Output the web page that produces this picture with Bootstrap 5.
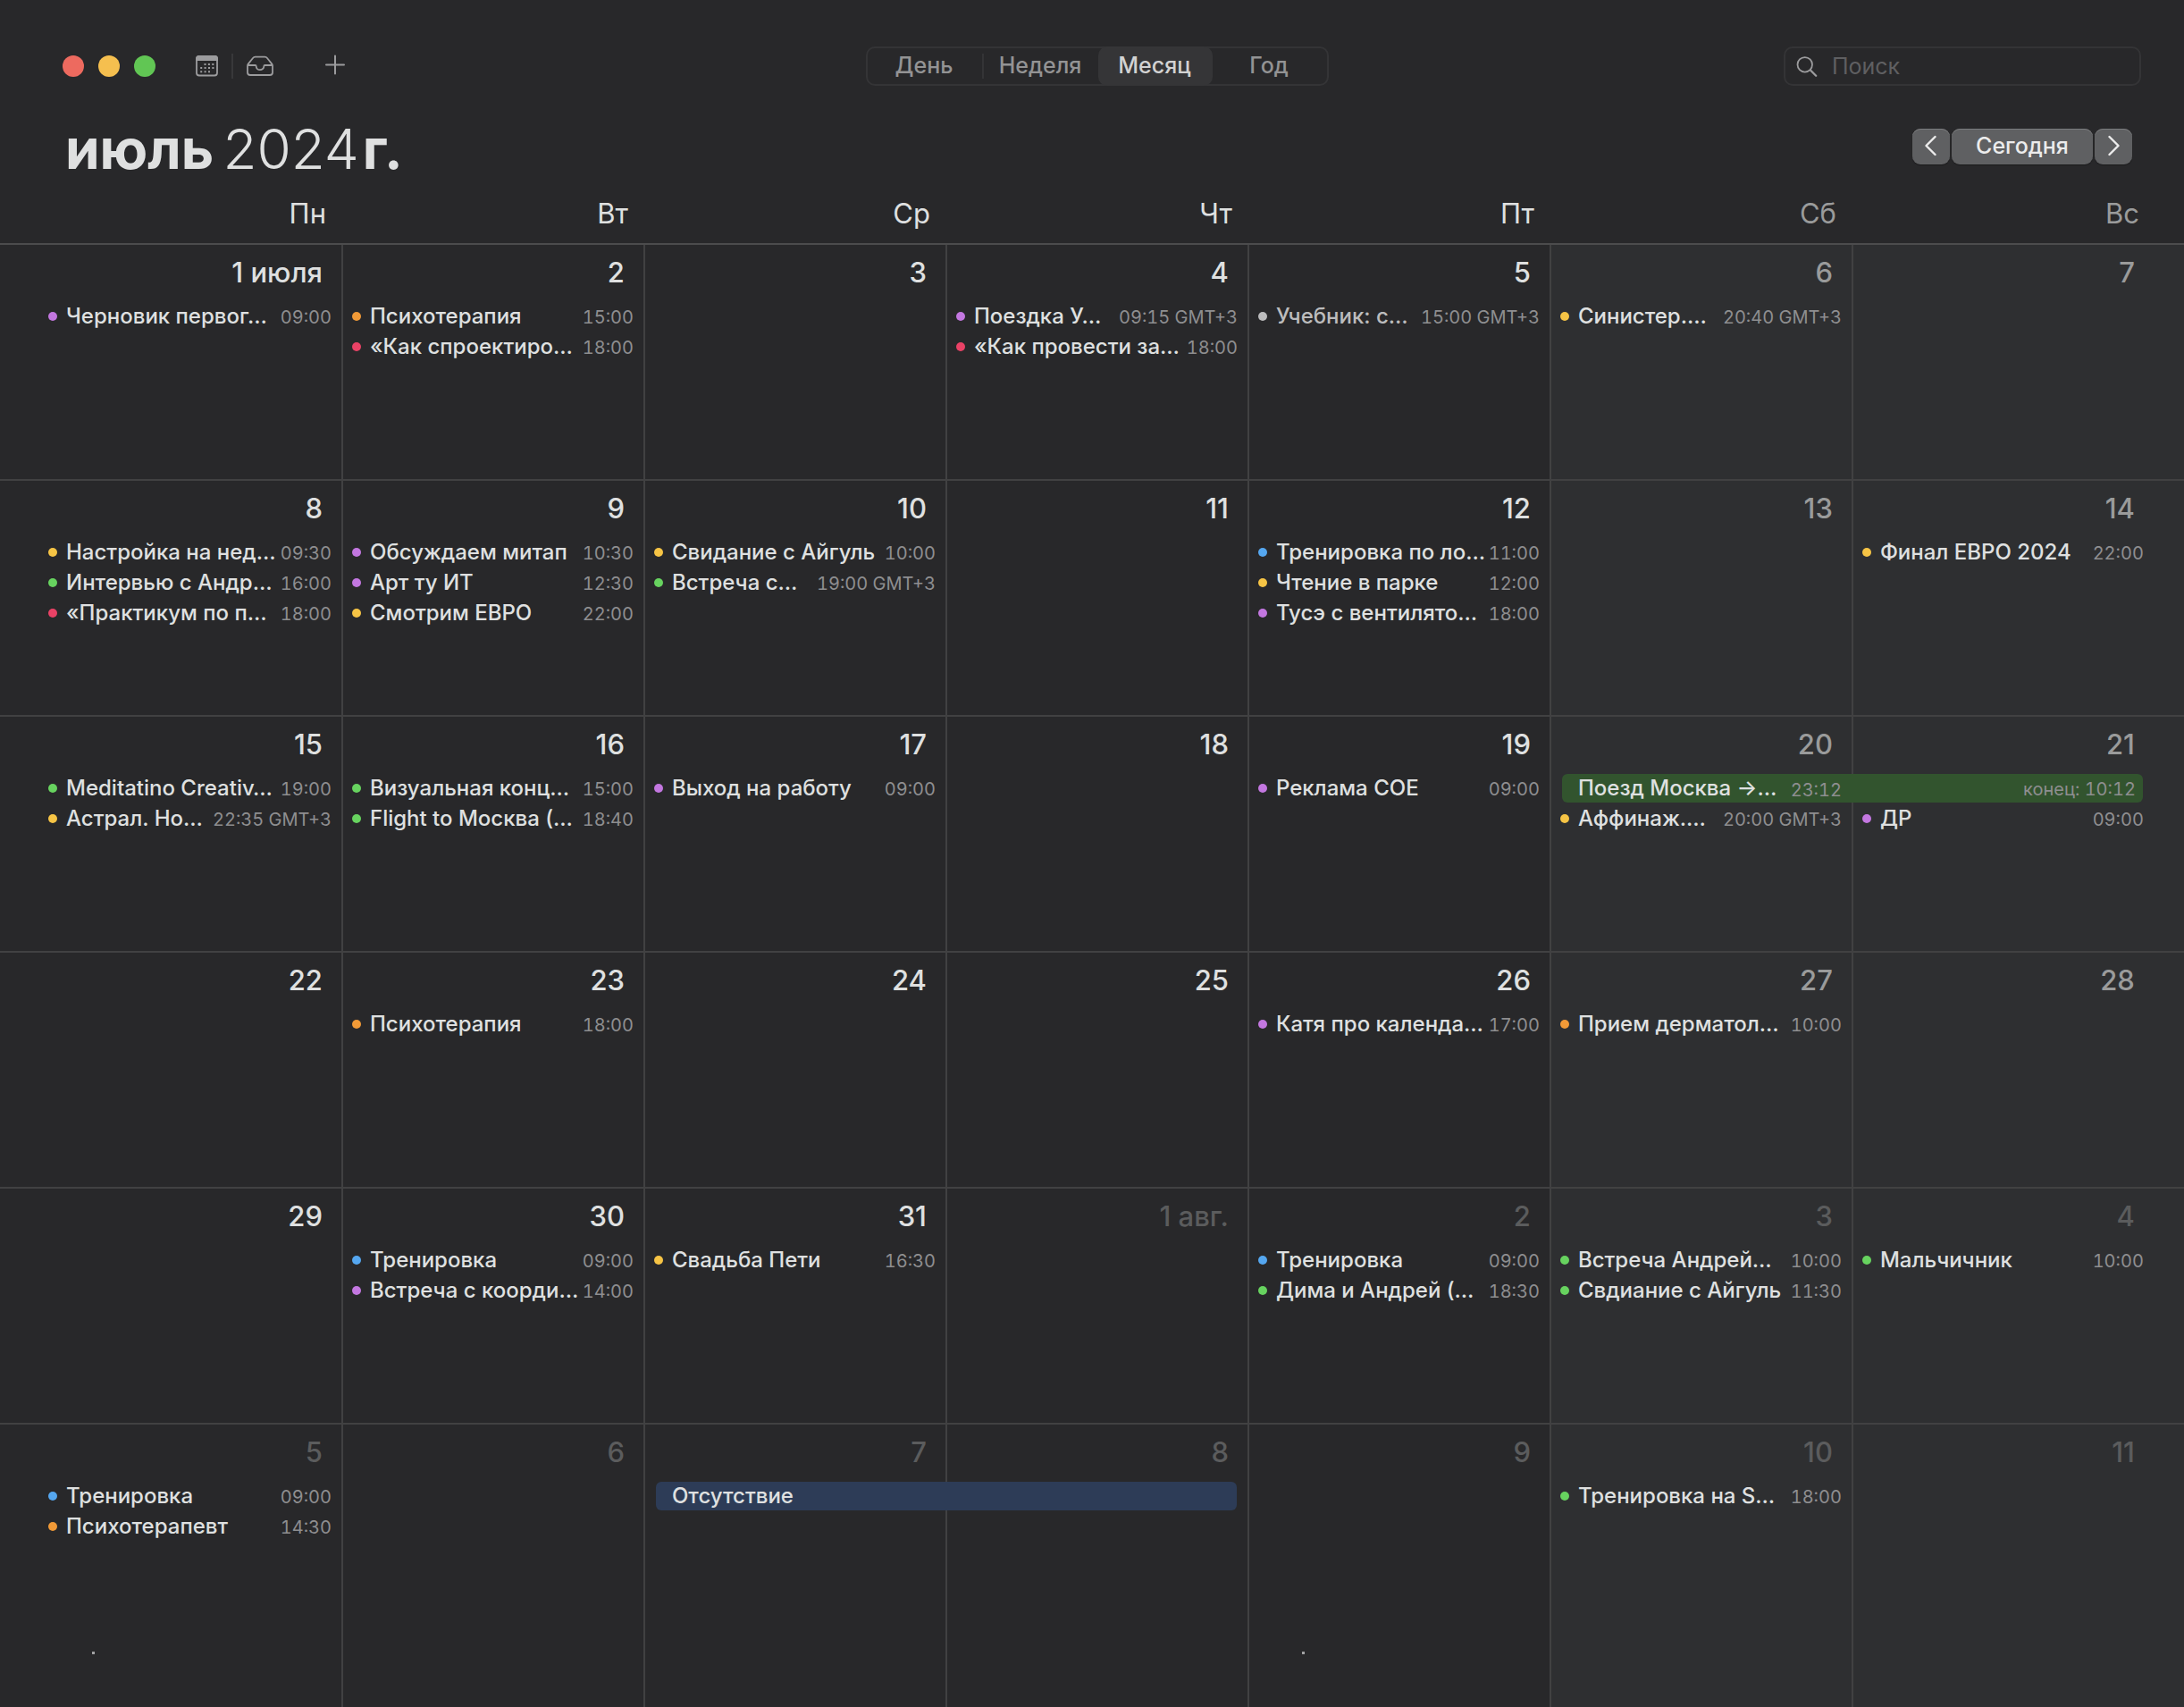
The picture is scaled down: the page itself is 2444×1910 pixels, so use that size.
<!DOCTYPE html>
<html lang="ru" data-bs-theme="dark">
<head>
<meta charset="utf-8">
<meta name="viewport" content="width=device-width, initial-scale=1">
<title>Календарь — июль 2024 г.</title>
<link rel="stylesheet" href="https://cdn.jsdelivr.net/npm/bootstrap@5.3.0/dist/css/bootstrap.min.css">
<style>
  :root {
    --cal-bg: #28282a;
    --cal-weekend: #2e2f31;
    --cal-line: #414142;
    --cal-frame: #343436;
    --cal-text: #dfe0e0;
    --cal-soft: #9a9b9b;
    --cal-faint: #5b5c5d;
  }
  body {
    background: var(--cal-bg);
    color: var(--cal-text);
    font-family: Inter, "Liberation Sans", sans-serif;
    font-size: 24px;
  }
  .toolbar { padding: 52px 48px 0 60px; }
  .toolbar-side { flex: 1 1 0; }
  .lights { gap: 16px; margin: 0 39px 0 10px; }
  .light { width: 24px; height: 24px; border-radius: 50%; border: 0; padding: 0; }
  .light-close { background: #ed6a5f; }
  .light-min { background: #f5bf4f; }
  .light-zoom { background: #61c654; }
  .tool { background: none; border: 0; padding: 0; line-height: 0; color: #9c9c9e; }
  .tool-line { width: 2px; height: 28px; background: #38383a; margin: 0 14px; }
  .tool-add { margin-left: 56px; }

  .views { width: 518px; height: 44px; border: 2px solid var(--cal-frame); border-radius: 10px; }
  .view-btn { flex: 1 1 0; border: 0; margin: -2px 0; background: none; color: #939394; font-size: 25px; line-height: 40px; font-weight: 500; padding: 0 2px 2px 0; border-radius: 10px; }
  .view-btn.current { background: #353537; color: #d2d2d2; }
  .view-line { width: 2px; height: 28px; background: var(--cal-frame); }

  .search { width: 400px; height: 44px; border: 2px solid var(--cal-frame); border-radius: 10px; padding-left: 12px; gap: 16px; color: #9c9c9e; }
  .search input { background: none; border: 0; outline: 0; color: var(--cal-text); font-size: 25px; line-height: 40px; padding: 0; min-width: 0; }
  .search input::placeholder { color: #5f5f61; opacity: 1; }

  .heading { padding: 30px 58px 0 73px; height: 106px; }
  .month-title { font-size: 62px; line-height: 76px; padding-top: 5px; font-weight: 700; color: var(--cal-text); }
  .month-title .year { font-weight: 300; margin: 0 4px 0 10px; }
  .pager { gap: 2px; }
  .pager-btn { height: 40px; border: 0; border-radius: 9px; background: #5f6062; color: #ececec; font-size: 25px; font-weight: 500; line-height: 38px; padding: 0 0 2px; box-shadow: inset 0 1px 0 #7b7c7e, 0 1px 1px #1c1c1d; }
  .pager-step { width: 42px; }
  .pager-today { width: 158px; }

  .week, .weekdays {
    --unit: calc((100% - 78px) / 7);
    display: grid;
    grid-template-columns: calc(var(--unit) + 46px) repeat(5, var(--unit)) calc(var(--unit) + 32px);
    grid-template-rows: 1fr;
  }
  .weekdays { border-bottom: 2px solid #4c4c4d; font-size: 31px; font-weight: 400; line-height: 66px; padding-top: 4px; text-align: right; }
  .weekdays div { padding-right: 19px; }
  .weekdays div:last-child { padding-right: 50px; }
  .weekdays .rest { color: var(--cal-soft); }

  .week { min-height: 264px; border-bottom: 2px solid var(--cal-line); }
  .week:last-child { flex-grow: 1; border-bottom: 0; }
  .day { grid-row: 1; display: flex; flex-direction: column; min-width: 0; border-right: 2px solid var(--cal-line); padding: 0 11px 0 10px; }
  .day:nth-child(1) { grid-column: 1; padding-left: 54px; }
  .day:nth-child(2) { grid-column: 2; }
  .day:nth-child(3) { grid-column: 3; }
  .day:nth-child(4) { grid-column: 4; }
  .day:nth-child(5) { grid-column: 5; }
  .day:nth-child(6) { grid-column: 6; background: var(--cal-weekend); }
  .day:nth-child(7) { grid-column: 7; background: var(--cal-weekend); border-right: 0; padding-right: 45px; }
  .date { display: block; text-align: right; font-size: 31px; font-weight: 500; line-height: 62px; padding: 0 10px 1px 0; }
  .day:nth-child(n+6) .date { color: var(--cal-soft); }
  .day.other .date { color: var(--cal-faint); }

  .ev { display: flex; align-items: center; height: 34px; white-space: nowrap; }
  .ev::before { content: ""; flex: none; width: 10px; height: 10px; border-radius: 50%; background: var(--dot); margin-right: 10px; }
  .ev b { flex: 1 1 0; min-width: 0; font-weight: 450; }
  .ev time, .span-bar time { font-size: 20px; color: #8e8e90; padding-top: 2px; font-variant-numeric: tabular-nums; }
  .ev-slot { height: 34px; }
  .purple { --dot: #c377e0; }
  .orange { --dot: #f19a37; }
  .red { --dot: #ea4266; }
  .yellow { --dot: #f6c445; }
  .green { --dot: #67d35f; }
  .blue { --dot: #55a7f0; }
  .grey { --dot: #bcbcbd; }
  .grey b { color: #bcbcbd; }
  .speck { width: 3px; height: 3px; background: #a2a2a3; margin: auto 0 59px 49px; }

  .span-bar { grid-row: 1; align-self: start; display: grid; grid-template-columns: 1fr 1fr; height: 32px; line-height: 32px; margin: 64px 14px 0 12px; border-radius: 6px; white-space: nowrap; z-index: 1; }
  .span-bar b { font-weight: 450; }
  .span-start { display: flex; justify-content: space-between; padding: 0 12px 0 18px; }
  .span-end { text-align: right; padding-right: 8px; }
  .span-trip { grid-column: 6 / 8; background: #32542e; margin-right: 46px; }
  .span-away { grid-column: 3 / 5; background: #2d3c57; }
</style>
<script src="https://cdn.jsdelivr.net/npm/bootstrap@5.3.0/dist/js/bootstrap.bundle.min.js"></script>
</head>
<body class="d-flex flex-column min-vh-100">

<header>
  <div class="toolbar d-flex align-items-center">
    <div class="toolbar-side d-flex align-items-center">
      <div class="lights d-flex">
        <button class="light light-close" aria-label="Закрыть"></button>
        <button class="light light-min" aria-label="Свернуть"></button>
        <button class="light light-zoom" aria-label="Развернуть"></button>
      </div>
      <button class="tool ms-1" aria-label="Календари">
        <svg width="28" height="26" viewBox="0 0 28 26" fill="none">
          <rect x="3" y="2" width="23" height="21.5" rx="3" stroke="currentColor" stroke-width="1.8"/>
          <path d="M2 7V4.500Q2 1 5.500 1h18Q27 1 27 4.500V7z" fill="currentColor"/>
          <path d="M11.500 11h11M7.200 15h15.400M7.200 19.200h11" stroke="currentColor" stroke-width="2" stroke-dasharray="2 2.400"/>
        </svg>
      </button>
      <div class="tool-line"></div>
      <button class="tool" aria-label="Входящие">
        <svg width="32" height="26" viewBox="0 0 32 26" fill="none" stroke="currentColor" stroke-width="1.8" stroke-linejoin="round">
          <path d="M2 12.500V20q0 3 3 3h22q3 0 3-3v-7.500q0-1-.7-1.900L24 4q-1-1.300-2.600-1.300H10.600Q9 2.700 8 4l-5.300 6.600Q2 11.500 2 12.500z"/>
          <path d="M2.500 12h8q1.200 0 1.200 1.200a4.300 4 0 0 0 8.600 0q0-1.200 1.200-1.200h8"/>
        </svg>
      </button>
      <button class="tool tool-add" aria-label="Добавить событие">
        <svg width="24" height="26" viewBox="0 0 24 26" fill="none" stroke="currentColor" stroke-width="2" stroke-linecap="round"><path d="M2 11.500h20M12 1.500v20"/></svg>
      </button>
    </div>
    <div class="views d-flex align-items-center" role="group" aria-label="Вид">
      <button class="view-btn">День</button>
      <span class="view-line"></span>
      <button class="view-btn">Неделя</button>
      <button class="view-btn current align-self-stretch" aria-pressed="true">Месяц</button>
      <button class="view-btn">Год</button>
    </div>
    <div class="toolbar-side d-flex justify-content-end">
      <label class="search d-flex align-items-center">
        <svg width="27" height="27" viewBox="0 0 27 27" fill="none" stroke="currentColor" stroke-width="2" stroke-linecap="round"><circle cx="11" cy="11" r="9.300"/><path d="M18 18l7 7" stroke-width="2.600"/></svg>
        <input type="text" class="flex-grow-1" placeholder="Поиск" aria-label="Поиск">
      </label>
    </div>
  </div>
  <div class="heading d-flex justify-content-between align-items-center">
    <h1 class="month-title d-flex m-0"><span>июль</span> <span class="year">2024</span> <span>г.</span></h1>
    <div class="pager d-flex">
      <button class="pager-btn pager-step" aria-label="Предыдущий месяц"><svg class="d-block mx-auto" width="14" height="24" viewBox="0 0 14 24" fill="none" stroke="currentColor" stroke-width="2.400" stroke-linecap="round" stroke-linejoin="round"><path d="M11.500 2L1.500 12l10 10"/></svg></button>
      <button class="pager-btn pager-today">Сегодня</button>
      <button class="pager-btn pager-step" aria-label="Следующий месяц"><svg class="d-block mx-auto" width="14" height="24" viewBox="0 0 14 24" fill="none" stroke="currentColor" stroke-width="2.400" stroke-linecap="round" stroke-linejoin="round"><path d="M2.500 2l10 10-10 10"/></svg></button>
    </div>
  </div>
</header>

<main class="d-flex flex-column flex-grow-1">
  <div class="weekdays">
    <div>Пн</div><div>Вт</div><div>Ср</div><div>Чт</div><div>Пт</div><div class="rest">Сб</div><div class="rest">Вс</div>
  </div>

  <section class="week">
    <div class="day"><span class="date">1 июля</span>
      <div class="ev purple"><b>Черновик первог…</b><time>09:00</time></div>
    </div>
    <div class="day"><span class="date">2</span>
      <div class="ev orange"><b>Психотерапия</b><time>15:00</time></div>
      <div class="ev red"><b>«Как спроектиро…</b><time>18:00</time></div>
    </div>
    <div class="day"><span class="date">3</span></div>
    <div class="day"><span class="date">4</span>
      <div class="ev purple"><b>Поездка У…</b><time>09:15 GMT+3</time></div>
      <div class="ev red"><b>«Как провести за…</b><time>18:00</time></div>
    </div>
    <div class="day"><span class="date">5</span>
      <div class="ev grey"><b>Учебник: с…</b><time>15:00 GMT+3</time></div>
    </div>
    <div class="day"><span class="date">6</span>
      <div class="ev yellow"><b>Синистер.…</b><time>20:40 GMT+3</time></div>
    </div>
    <div class="day"><span class="date">7</span></div>
  </section>

  <section class="week">
    <div class="day"><span class="date">8</span>
      <div class="ev yellow"><b>Настройка на нед…</b><time>09:30</time></div>
      <div class="ev green"><b>Интервью с Андр…</b><time>16:00</time></div>
      <div class="ev red"><b>«Практикум по п…</b><time>18:00</time></div>
    </div>
    <div class="day"><span class="date">9</span>
      <div class="ev purple"><b>Обсуждаем митап</b><time>10:30</time></div>
      <div class="ev purple"><b>Арт ту ИТ</b><time>12:30</time></div>
      <div class="ev yellow"><b>Смотрим ЕВРО</b><time>22:00</time></div>
    </div>
    <div class="day"><span class="date">10</span>
      <div class="ev yellow"><b>Свидание с Айгуль</b><time>10:00</time></div>
      <div class="ev green"><b>Встреча с…</b><time>19:00 GMT+3</time></div>
    </div>
    <div class="day"><span class="date">11</span></div>
    <div class="day"><span class="date">12</span>
      <div class="ev blue"><b>Тренировка по ло…</b><time>11:00</time></div>
      <div class="ev yellow"><b>Чтение в парке</b><time>12:00</time></div>
      <div class="ev purple"><b>Тусэ с вентилято…</b><time>18:00</time></div>
    </div>
    <div class="day"><span class="date">13</span></div>
    <div class="day"><span class="date">14</span>
      <div class="ev yellow"><b>Финал ЕВРО 2024</b><time>22:00</time></div>
    </div>
  </section>

  <section class="week">
    <div class="day"><span class="date">15</span>
      <div class="ev green"><b>Meditatino Creativ…</b><time>19:00</time></div>
      <div class="ev yellow"><b>Астрал. Но…</b><time>22:35 GMT+3</time></div>
    </div>
    <div class="day"><span class="date">16</span>
      <div class="ev green"><b>Визуальная конц…</b><time>15:00</time></div>
      <div class="ev green"><b>Flight to Москва (…</b><time>18:40</time></div>
    </div>
    <div class="day"><span class="date">17</span>
      <div class="ev purple"><b>Выход на работу</b><time>09:00</time></div>
    </div>
    <div class="day"><span class="date">18</span></div>
    <div class="day"><span class="date">19</span>
      <div class="ev purple"><b>Реклама СОЕ</b><time>09:00</time></div>
    </div>
    <div class="day"><span class="date">20</span>
      <div class="ev-slot"></div>
      <div class="ev yellow"><b>Аффинаж.…</b><time>20:00 GMT+3</time></div>
    </div>
    <div class="day"><span class="date">21</span>
      <div class="ev-slot"></div>
      <div class="ev purple"><b>ДР</b><time>09:00</time></div>
    </div>
    <div class="span-bar span-trip">
      <div class="span-start"><b>Поезд Москва →…</b><time>23:12</time></div>
      <div class="span-end"><time>конец: 10:12</time></div>
    </div>
  </section>

  <section class="week">
    <div class="day"><span class="date">22</span></div>
    <div class="day"><span class="date">23</span>
      <div class="ev orange"><b>Психотерапия</b><time>18:00</time></div>
    </div>
    <div class="day"><span class="date">24</span></div>
    <div class="day"><span class="date">25</span></div>
    <div class="day"><span class="date">26</span>
      <div class="ev purple"><b>Катя про календа…</b><time>17:00</time></div>
    </div>
    <div class="day"><span class="date">27</span>
      <div class="ev orange"><b>Прием дерматол…</b><time>10:00</time></div>
    </div>
    <div class="day"><span class="date">28</span></div>
  </section>

  <section class="week">
    <div class="day"><span class="date">29</span></div>
    <div class="day"><span class="date">30</span>
      <div class="ev blue"><b>Тренировка</b><time>09:00</time></div>
      <div class="ev purple"><b>Встреча с коорди…</b><time>14:00</time></div>
    </div>
    <div class="day"><span class="date">31</span>
      <div class="ev yellow"><b>Свадьба Пети</b><time>16:30</time></div>
    </div>
    <div class="day other"><span class="date">1 авг.</span></div>
    <div class="day other"><span class="date">2</span>
      <div class="ev blue"><b>Тренировка</b><time>09:00</time></div>
      <div class="ev green"><b>Дима и Андрей (…</b><time>18:30</time></div>
    </div>
    <div class="day other"><span class="date">3</span>
      <div class="ev green"><b>Встреча Андрей…</b><time>10:00</time></div>
      <div class="ev green"><b>Свдиание с Айгуль</b><time>11:30</time></div>
    </div>
    <div class="day other"><span class="date">4</span>
      <div class="ev green"><b>Мальчичник</b><time>10:00</time></div>
    </div>
  </section>

  <section class="week">
    <div class="day other"><span class="date">5</span>
      <div class="ev blue"><b>Тренировка</b><time>09:00</time></div>
      <div class="ev orange"><b>Психотерапевт</b><time>14:30</time></div>
      <div class="speck"></div>
    </div>
    <div class="day other"><span class="date">6</span></div>
    <div class="day other"><span class="date">7</span></div>
    <div class="day other"><span class="date">8</span></div>
    <div class="day other"><span class="date">9</span><div class="speck"></div></div>
    <div class="day other"><span class="date">10</span>
      <div class="ev green"><b>Тренировка на S…</b><time>18:00</time></div>
    </div>
    <div class="day other"><span class="date">11</span></div>
    <div class="span-bar span-away">
      <div class="span-start"><b>Отсутствие</b></div>
    </div>
  </section>
</main>
</body>
</html>
